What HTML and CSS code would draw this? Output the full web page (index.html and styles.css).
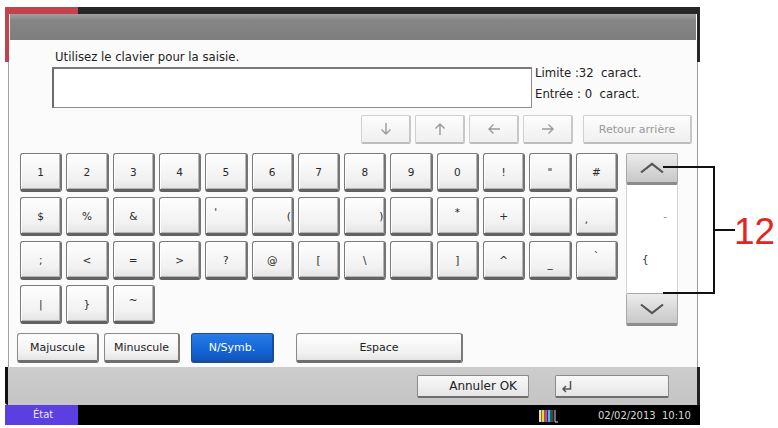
FILE: index.html
```html
<!DOCTYPE html>
<html lang="fr">
<head>
<meta charset="utf-8">
<title>Clavier</title>
<link rel="stylesheet" href="styles.css">
</head>
<body>
<div class="screen">
  <div class="topstrip"></div>
  <div class="window">
    <div class="titlebar"></div>
    <div class="panel">
      <div class="prompt">Utilisez le clavier pour la saisie.</div>
      <div class="input-row">
        <div class="input"></div>
        <div class="counts">
          <div>Limite :32&nbsp; caract.</div>
          <div>Entrée : 0&nbsp; caract.</div>
        </div>
      </div>
      <div class="nav-row">
        <div class="nav-btn"><svg width="14" height="14" viewBox="0 0 14 14"><path d="M7 1V12M2.5 7.5L7 12L11.5 7.5" fill="none" stroke="#9a9a9a" stroke-width="1.4"/></svg></div>
        <div class="nav-btn"><svg width="14" height="14" viewBox="0 0 14 14"><path d="M7 13V2M2.5 6.5L7 2L11.5 6.5" fill="none" stroke="#9a9a9a" stroke-width="1.4"/></svg></div>
        <div class="nav-btn"><svg width="14" height="14" viewBox="0 0 14 14"><path d="M13 7H2M6.5 2.5L2 7L6.5 11.5" fill="none" stroke="#9a9a9a" stroke-width="1.4"/></svg></div>
        <div class="nav-btn"><svg width="14" height="14" viewBox="0 0 14 14"><path d="M1 7H12M7.5 2.5L12 7L7.5 11.5" fill="none" stroke="#9a9a9a" stroke-width="1.4"/></svg></div>
        <div class="nav-btn back">Retour arrière</div>
      </div>
      <div class="kb">
        <div class="keys">
          <div class="key">1</div><div class="key">2</div><div class="key">3</div><div class="key">4</div><div class="key">5</div><div class="key">6</div><div class="key">7</div><div class="key">8</div><div class="key">9</div><div class="key">0</div><div class="key">!</div><div class="key">"</div><div class="key">#</div>
          <div class="key">$</div><div class="key">%</div><div class="key">&amp;</div><div class="key"></div><div class="key left top">'</div><div class="key right">(</div><div class="key"></div><div class="key right">)</div><div class="key"></div><div class="key top">*</div><div class="key">+</div><div class="key"></div><div class="key left low">,</div>
          <div class="key">;</div><div class="key">&lt;</div><div class="key">=</div><div class="key">&gt;</div><div class="key">?</div><div class="key">@</div><div class="key">[</div><div class="key">\</div><div class="key"></div><div class="key">]</div><div class="key">^</div><div class="key low">_</div><div class="key top">`</div>
          <div class="key">|</div><div class="key">}</div><div class="key top">~</div>
        </div>
        <div class="scroll">
          <div class="sbtn up"><svg width="26" height="12" viewBox="0 0 26 12"><path d="M2 10.5L13 2L24 10.5" fill="none" stroke="#555" stroke-width="2.2"/></svg></div>
          <div class="slist">
            <div class="sitem dash">-</div>
            <div class="sitem brace">{</div>
          </div>
          <div class="sbtn down"><svg width="26" height="12" viewBox="0 0 26 12"><path d="M2 1.5L13 10L24 1.5" fill="none" stroke="#555" stroke-width="2.2"/></svg></div>
        </div>
      </div>
      <div class="modes">
        <div class="mode w-maj">Majuscule</div>
        <div class="mode w-min">Minuscule</div>
        <div class="mode active w-sym">N/Symb.</div>
        <div class="mode w-esp">Espace</div>
      </div>
    </div>
    <div class="actionbar">
      <div class="abtn cancel">Annuler OK</div>
      <div class="abtn enter"><svg width="14" height="14" viewBox="0 0 14 14"><path d="M10.5 2V10H3M6 7L3 10L6 13" fill="none" stroke="#555" stroke-width="1.5"/></svg></div>
    </div>
  </div>
  <div class="statusbar">
    <div class="etat">État</div>
    <div class="toner"><svg width="20" height="14" viewBox="0 0 20 14"><rect x="0" y="1" width="2.5" height="12" fill="#e9e2b0"/><rect x="3" y="1" width="2.5" height="12" fill="#f1d52a"/><rect x="6" y="1" width="2.5" height="12" fill="#c43cb0"/><rect x="9" y="1" width="2.5" height="12" fill="#38bfe6"/><rect x="12" y="1" width="2.5" height="12" fill="#444"/><path d="M16 1V13H19" fill="none" stroke="#ddd" stroke-width="1"/></svg></div>
    <div class="datetime">02/02/2013&nbsp; 10:10</div>
  </div>
</div>
<svg class="callout-lines" width="80" height="140" viewBox="0 0 80 140">
  <path d="M3 7H54V133H3M54 70H75" fill="none" stroke="#111" stroke-width="2"/>
</svg>
<div class="callout-num">12</div>
</body>
</html>
```

FILE: styles.css
```css
html, body {
  margin: 0;
  padding: 0;
}
body {
  width: 778px;
  height: 428px;
  overflow: hidden;
  position: relative;
  background: #fff;
  font-family: "DejaVu Sans", "Liberation Sans", sans-serif;
  color: #222;
}
.screen {
  margin: 7px 0 0 5px;
  width: 695px;
}
.topstrip {
  height: 7px;
  background: linear-gradient(90deg, #c3424c 0 73px, #262626 73px);
}
.window {
  padding: 0 3px 0 4px;
  background:
    linear-gradient(#c3424c, #c3424c) 0 0 / 4px 48px no-repeat,
    linear-gradient(#262626, #262626) 100% 0 / 3px 48px no-repeat,
    linear-gradient(90deg, #fff 0 3px, #a4a4a4 3px 4px, #fbfbfb 4px calc(100% - 3px), #9a9a9a calc(100% - 3px) calc(100% - 2px), #fff calc(100% - 2px));
}
.titlebar {
  height: 26px;
  margin: 0 1px;
  background: linear-gradient(#a0a0a0, #858585 25%, #7e7e7e);
}
.panel {
  background: #fbfbfb;
  padding: 10px 0 4px 0;
}
.prompt {
  margin-left: 46px;
  font-size: 11.7px;
  line-height: 14px;
  height: 14px;
}
.input-row {
  display: flex;
  margin: 3px 0 0 43px;
  height: 41px;
}
.input {
  width: 477px;
  height: 38px;
  background: #fff;
  border: 1px solid #8c8c8c;
  border-top: 2px solid #7a7a7a;
  border-left: 2px solid #6c6c6c;
}
.counts {
  margin: -4px 0 0 3px;
  font-size: 11.7px;
  line-height: 21px;
  white-space: nowrap;
}
.nav-row {
  display: flex;
  justify-content: flex-end;
  gap: 4px;
  margin-top: 7px;
  padding-right: 5px;
  height: 29px;
}
.nav-btn {
  width: 50px;
  box-sizing: border-box;
  display: flex;
  align-items: center;
  justify-content: center;
  background: linear-gradient(#fdfdfd, #f0f0f0);
  border: 1px solid #d0d0d0;
  border-bottom: 2px solid #bdbdbd;
  border-right: 2px solid #c8c8c8;
  border-radius: 2px;
}
.nav-btn.back {
  width: 109px;
  margin-left: 6px;
  font-size: 11px;
  color: #9a9a9a;
}
.kb {
  display: flex;
  margin-top: 9px;
  padding-left: 11px;
  height: 173px;
}
.keys {
  width: 598px;
  display: grid;
  grid-template-columns: repeat(13, 1fr);
  grid-auto-rows: 39px;
  column-gap: 4px;
  row-gap: 5px;
  align-content: start;
}
.key {
  box-sizing: border-box;
  display: flex;
  align-items: center;
  justify-content: center;
  font-size: 10.5px;
  color: #2a2a2a;
  background: linear-gradient(#fefefe, #f2f2f2 70%, #e4e4e4);
  border: 1px solid #7a7a7a;
  border-bottom: 3px solid #626262;
  border-right: 2px solid #747474;
  border-radius: 3px;
  box-shadow: inset 1px 1px 0 #fff, inset -1px -1px 0 #b4b4b4;
}
.key.right { justify-content: flex-end; padding-right: 1px; }
.key.left { justify-content: flex-start; padding-left: 8px; }
.key.top { align-items: flex-start; padding-top: 8px; }
.key.low { align-items: flex-end; padding-bottom: 8px; }
.scroll {
  margin-left: 8px;
  width: 52px;
  display: flex;
  flex-direction: column;
}
.sbtn {
  box-sizing: border-box;
  display: flex;
  align-items: center;
  justify-content: center;
  background: linear-gradient(#ececec, #d6d6d6 60%, #c8c8c8);
  border: 1px solid #a8a8a8;
  border-bottom: 3px solid #8c8c8c;
  border-radius: 2px;
}
.sbtn.up { height: 32px; }
.sbtn.down { height: 33px; }
.slist {
  height: 108px;
  box-sizing: border-box;
  background: #fff;
  border-left: 1px solid #d4d4d4;
  border-right: 1px solid #d4d4d4;
  font-size: 10.5px;
  color: #333;
}
.sitem {
  display: flex;
  align-items: center;
}
.sitem.dash { height: 62px; justify-content: flex-end; padding-right: 10px; color: #888; }
.sitem.brace { height: 24px; padding-left: 15px; }
.modes {
  display: flex;
  margin-top: 7px;
  padding-left: 8px;
  height: 30px;
}
.mode {
  box-sizing: border-box;
  display: flex;
  align-items: center;
  justify-content: center;
  font-size: 11px;
  color: #222;
  background: linear-gradient(#fefefe, #f2f2f2 70%, #e4e4e4);
  border: 1px solid #8a8a8a;
  border-bottom: 3px solid #6e6e6e;
  border-right: 2px solid #7a7a7a;
  border-radius: 3px;
}
.mode.active {
  color: #fff;
  background: linear-gradient(#2a7de8, #1565d6 60%, #0f56bd);
  border-color: #1a4c9a;
}
.w-maj { width: 82px; }
.w-min { width: 76px; margin-left: 5px; }
.w-sym { width: 83px; margin-left: 11px; }
.w-esp { width: 167px; margin-left: 22px; }
.actionbar {
  height: 38px;
  box-sizing: border-box;
  margin: 0 -3px 0 -4px;
  padding: 8px 28px 0 0;
  display: flex;
  justify-content: flex-end;
  gap: 26px;
  background: linear-gradient(#cdcdcd, #c4c4c4);
  border-left: 3px solid #111;
  border-right: 3px solid #222;
  border-bottom-left-radius: 3px;
}
.abtn {
  box-sizing: border-box;
  height: 23px;
  display: flex;
  align-items: center;
  background: linear-gradient(#f8f8f8, #e6e6e6);
  border: 1px solid #8a8a8a;
  border-bottom: 2px solid #6e6e6e;
  border-radius: 2px;
  font-size: 12px;
  color: #222;
}
.abtn.cancel {
  width: 112px;
  justify-content: flex-end;
  padding-right: 11px;
}
.abtn.enter {
  width: 114px;
  padding-left: 4px;
}
.statusbar {
  height: 20px;
  background: #000;
  display: flex;
  align-items: center;
}
.etat {
  width: 73px;
  height: 20px;
  box-sizing: border-box;
  background: #5b3fe0;
  color: #e8e4ff;
  font-size: 10px;
  line-height: 20px;
  padding-left: 28px;
}
.toner {
  margin-left: 461px;
  height: 14px;
}
.datetime {
  margin-left: 39px;
  color: #d8d8d8;
  font-size: 10px;
  white-space: nowrap;
}
.callout-lines {
  position: absolute;
  left: 660px;
  top: 160px;
}
.callout-num {
  position: absolute;
  left: 734px;
  top: 213px;
  font-family: "Liberation Sans", Arial, sans-serif;
  font-size: 37px;
  line-height: 1;
  color: #e3261f;
}
```
